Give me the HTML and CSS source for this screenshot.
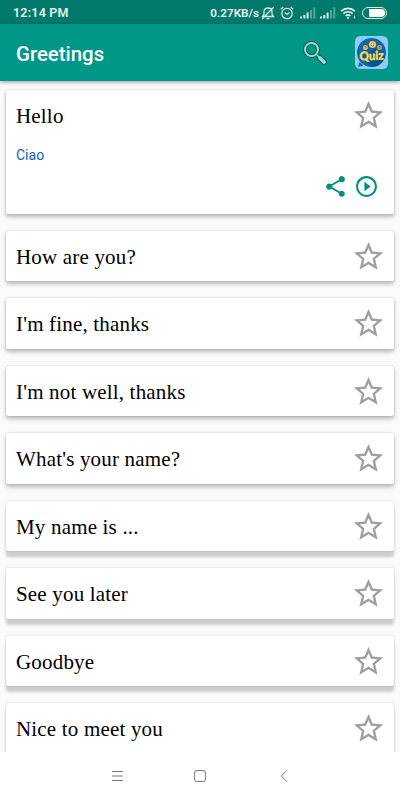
FILE: index.html
```html
<!DOCTYPE html>
<html lang="en">
<head>
    <meta charset="UTF-8">
    <meta name="viewport" content="width=device-width, initial-scale=1.0">
    <title>Greetings</title>
    <link rel="stylesheet" href="styles.css">
</head>
<body>

    <!-- shared icons -->
    <svg class="hidden">
        <symbol id="star" viewBox="0 0 24 24">
            <path d="M22 9.24l-7.19-.62L12 2 9.19 8.63 2 9.24l5.46 4.73L5.82 21 12 17.27 18.18 21l-1.63-7.03L22 9.24zM12 15.4l-3.76 2.27 1-4.28-3.32-2.88 4.38-.38L12 6.1l1.71 4.04 4.38.38-3.32 2.88 1 4.28L12 15.4z"/>
        </symbol>
        <symbol id="signal" viewBox="0 0 16 12">
            <path d="M0 9.500h2v2H0zM3.300 8h2v3.500h-2zM6.600 5.500h2v6h-2z"/>
            <path d="M10 3h2v8.500h-2zM13.300 .5h2v11h-2z" opacity=".4"/>
        </symbol>
    </svg>

    <div class="status-bar">
        <span class="time">12:14 PM</span>
        <span class="speed">0.27KB/s</span>
        <svg class="bell" viewBox="0 0 14 14">
            <path d="M1.500 10.500h11L11 8.500V5.500C11 3.300 9.500 2 7 2S3 3.300 3 5.500v3L1.500 10.500zM5.500 12.700h3M12.800 1L1.200 13"/>
        </svg>
        <svg class="alarm" viewBox="0 0 14 14">
            <circle cx="7" cy="7.500" r="5.200"/>
            <path d="M4.700 6.500L7 8.500l2.500-2M.8 3.300L3.300 1M13.200 3.300L10.700 1"/>
        </svg>
        <svg class="signal"><use href="#signal"/></svg>
        <svg class="signal"><use href="#signal"/></svg>
        <svg class="wifi" viewBox="0 0 16 12">
            <path d="M1 4.300C5 .4 11 .4 15 4.300M3.300 6.700c2.700-2.600 6.700-2.600 9.400 0M5.600 9c1.400-1.300 3.400-1.300 4.800 0"/>
            <circle cx="8" cy="10.800" r="1.100"/>
            <path class="thin" d="M14.500 8.500v3"/>
        </svg>
        <span class="battery"><span class="charge"></span></span>
    </div>

    <div class="toolbar">
        <h1>Greetings</h1>
        <svg class="search" viewBox="0 0 24 24">
            <path class="handle-edge" d="M16.500 16.500l4.500 4.500"/>
            <circle class="lens-edge" cx="8.500" cy="8.500" r="6.500"/>
            <path class="handle" d="M14 14l2 2"/>
            <path class="handle" d="M17 17l4 4"/>
            <circle class="lens" cx="8.500" cy="8.500" r="6.500"/>
        </svg>
        <svg class="quiz" viewBox="0 0 33 33">
            <rect width="33" height="33" rx="5.500" fill="#90cdf6"/>
            <circle cx="16.500" cy="16.500" r="14.500" fill="#0b68ab"/>
            <path d="M20 12l10 9c-2 6-7 10-13 10L6 22z" fill="#07558f"/>
            <path d="M3 31l1.500-5 4 3.500z" fill="#0b68ab"/>
            <circle cx="10.500" cy="11.500" r="2.500" fill="#f0b84c"/>
            <circle cx="17.500" cy="8.500" r="3.600" fill="#f6c75a"/>
            <circle cx="24.500" cy="11.500" r="2.500" fill="#c99b58"/>
            <path d="M16 7.500h.8M18.500 7.500h.8M16 9.500q1.500 1.500 3 0M10 10.700h1v1.500M24 10.500h1v2" fill="none" stroke="#7a5322" stroke-width=".7"/>
            <text x="16.500" y="24" text-anchor="middle" textLength="24" lengthAdjust="spacingAndGlyphs" transform="rotate(-3 16.500 20)">Quiz</text>
        </svg>
    </div>

    <div class="list">
        <div class="card open">
            <div class="row">
                <span class="phrase">Hello</span>
                <svg class="star"><use href="#star"/></svg>
            </div>
            <p class="translation">Ciao</p>
            <div class="actions">
                <svg viewBox="0 0 24 24">
                    <path d="M18 16.080c-.76 0-1.440.3-1.960.77L8.910 12.700c.05-.23.09-.46.09-.7s-.04-.47-.09-.7l7.050-4.110c.54.5 1.250.81 2.040.81 1.660 0 3-1.340 3-3s-1.340-3-3-3-3 1.340-3 3c0 .24.04.47.09.7L8.040 9.810C7.500 9.310 6.790 9 6 9c-1.660 0-3 1.340-3 3s1.340 3 3 3c.79 0 1.500-.31 2.040-.81l7.120 4.160c-.05.21-.08.43-.08.65 0 1.610 1.310 2.920 2.920 2.920s2.920-1.310 2.920-2.920-1.310-2.920-2.920-2.920z"/>
                </svg>
                <svg viewBox="0 0 24 24">
                    <path d="M10 16.500l6-4.500-6-4.500v9zM12 2C6.480 2 2 6.480 2 12s4.480 10 10 10 10-4.480 10-10S17.520 2 12 2zm0 18c-4.410 0-8-3.590-8-8s3.590-8 8-8 8 3.590 8 8-3.590 8-8 8z"/>
                </svg>
            </div>
        </div>
        <div class="card row">
            <span class="phrase">How are you?</span>
            <svg class="star"><use href="#star"/></svg>
        </div>
        <div class="card row">
            <span class="phrase">I'm fine, thanks</span>
            <svg class="star"><use href="#star"/></svg>
        </div>
        <div class="card row">
            <span class="phrase">I'm not well, thanks</span>
            <svg class="star"><use href="#star"/></svg>
        </div>
        <div class="card row">
            <span class="phrase">What's your name?</span>
            <svg class="star"><use href="#star"/></svg>
        </div>
        <div class="card row low">
            <span class="phrase">My name is ...</span>
            <svg class="star"><use href="#star"/></svg>
        </div>
        <div class="card row low">
            <span class="phrase">See you later</span>
            <svg class="star"><use href="#star"/></svg>
        </div>
        <div class="card row low">
            <span class="phrase">Goodbye</span>
            <svg class="star"><use href="#star"/></svg>
        </div>
        <div class="card row low">
            <span class="phrase">Nice to meet you</span>
            <svg class="star"><use href="#star"/></svg>
        </div>
    </div>

    <div class="nav-bar">
        <svg viewBox="0 0 14 14"><path d="M3 2.500h11M3 7h11M3 11.500h11"/></svg>
        <svg viewBox="0 0 14 14"><rect x="1.500" y="1.500" width="11" height="11" rx="2.500"/></svg>
        <svg viewBox="0 0 14 14"><path d="M10 1.200L4.300 7l5.700 5.800"/></svg>
    </div>

</body>
</html>
```

FILE: styles.css
```css
body {
    margin: 0;
    height: 800px;
    display: flex;
    flex-direction: column;
    overflow: hidden;
    background-color: #fafafa;
    font-family: Roboto, sans-serif;
}
svg {
    display: block;
    flex: none;
}
.hidden {
    display: none;
}

/* status bar */
.status-bar {
    height: 24px;
    flex: none;
    display: flex;
    align-items: center;
    box-sizing: border-box;
    padding: 1px 13px 0 13px;
    background-color: #01796b;
    color: #e6f2f0;
    font-size: 11.7px;
    font-weight: 600;
}
.time {
    flex: 1;
    font-size: 12.5px;
    letter-spacing: 0.2px;
}
.speed {
    margin-right: 2px;
}
.bell, .alarm {
    width: 14px;
    height: 14px;
    fill: none;
    stroke: #d5e9e6;
    stroke-width: 1.3;
}
.alarm {
    margin: 0 6px 0 5px;
}
.signal {
    width: 16px;
    height: 12px;
    margin-right: 4px;
    fill: #d5e9e6;
}
.wifi {
    width: 16px;
    height: 12px;
    margin-right: 6px;
    fill: #e6f2f0;
}
.wifi path {
    fill: none;
    stroke: #e6f2f0;
    stroke-width: 1.6;
}
.wifi .thin {
    stroke-width: 1;
}
.battery {
    width: 25px;
    height: 12px;
    box-sizing: border-box;
    display: flex;
    justify-content: flex-end;
    padding: 1px 1.5px;
    border: 1px solid #d5e9e6;
    border-radius: 6px;
}
.charge {
    width: 16px;
    border-radius: 1px 4px 4px 1px;
    background-color: #fff;
}

/* toolbar */
.toolbar {
    height: 57px;
    flex: none;
    display: flex;
    align-items: center;
    position: relative;
    box-sizing: border-box;
    padding: 0 12px 0 16px;
    background-color: #009788;
    box-shadow: 0 1px 4px rgba(0, 0, 0, 0.4);
}
h1 {
    flex: 1;
    margin: 3px 0 0;
    color: #fff;
    font-size: 20.4px;
    font-weight: 500;
}
.search {
    width: 24px;
    height: 24px;
    margin-right: 28px;
    fill: none;
    stroke-linecap: round;
}
.lens-edge {
    stroke: #0c5d54;
    stroke-width: 4;
}
.lens {
    stroke: #9fdccf;
    stroke-width: 2;
}
.handle-edge {
    stroke: #0c5d54;
    stroke-width: 5.5;
}
.handle {
    stroke: #9fdccf;
    stroke-width: 1.5;
}
.handle + .handle {
    stroke-width: 3.8;
}
.quiz {
    width: 33px;
    height: 33px;
}
.quiz text {
    fill: #fddc4e;
    stroke: #fddc4e;
    stroke-width: 0.4;
    font-family: Lato, sans-serif;
    font-size: 12px;
    font-weight: 900;
}

/* phrases */
.list {
    flex: 1;
    display: flex;
    flex-direction: column;
    gap: 17px;
    min-height: 0;
    overflow: hidden;
    padding: 8.7px 6px 0;
}
.card {
    flex: none;
    box-sizing: border-box;
    height: 50.5px;
    padding: 0 8.2px 0 10px;
    background-color: #fff;
    border-radius: 2px;
    box-shadow: 0 0 2px rgba(0, 0, 0, 0.2), 0 3px 4px rgba(0, 0, 0, 0.25);
}
.card.low {
    box-shadow: 0 0 2px rgba(0, 0, 0, 0.18), 0 6px 3px rgba(0, 0, 0, 0.18);
}
.card.open {
    height: 124.3px;
}
.row {
    display: flex;
    align-items: center;
    justify-content: space-between;
}
.open .row {
    height: 52px;
}
.phrase {
    padding-top: 2.5px;
    color: #000;
    font-family: "Liberation Serif", serif;
    font-size: 21px;
    letter-spacing: 0.18px;
}
.star {
    width: 35px;
    height: 35px;
    fill: #a09e9f;
}
.translation {
    margin: 4px 0 0;
    color: #0d62b8;
    font-size: 14px;
    line-height: 18px;
}
.actions {
    display: flex;
    justify-content: flex-end;
    gap: 6px;
    margin: 10px 7.3px 0 0;
}
.actions svg {
    width: 25px;
    height: 25px;
    fill: #009181;
}

/* navigation bar */
.nav-bar {
    height: 48px;
    flex: none;
    display: flex;
    align-items: center;
    justify-content: center;
    gap: 70px;
    position: relative;
    background-color: #fff;
}
.nav-bar svg {
    width: 14px;
    height: 14px;
    fill: none;
    stroke: #777;
    stroke-width: 1;
}
```
